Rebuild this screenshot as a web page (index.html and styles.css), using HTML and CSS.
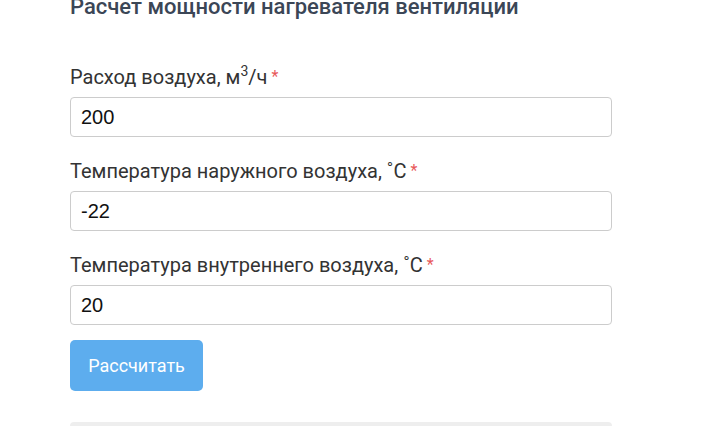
FILE: index.html
```html
<!DOCTYPE html>
<html lang="ru">
<head>
<meta charset="utf-8">
<link rel="stylesheet" href="styles.css">
</head>
<body>
<div class="calc">
  <h2 class="title">Расчет мощности нагревателя вентиляции</h2>
  <form class="form">
    <div class="group">
      <label class="label">Расход воздуха, м<sup>3</sup>/ч<span class="req">*</span></label>
      <input class="input" type="text" value="200">
    </div>
    <div class="group">
      <label class="label">Температура наружного воздуха, ˚C<span class="req">*</span></label>
      <input class="input" type="text" value="-22">
    </div>
    <div class="group">
      <label class="label">Температура внутреннего воздуха, ˚C<span class="req">*</span></label>
      <input class="input" type="text" value="20">
    </div>
    <button class="btn" type="button">Рассчитать</button>
  </form>
  <div class="result"></div>
</div>
</body>
</html>
```
FILE: styles.css
```css
html, body {
  margin: 0;
  padding: 0;
  background: #fff;
}
body {
  font-family: Roboto, "Liberation Sans", sans-serif;
  color: #333;
  overflow: hidden;
}
.calc {
  width: 542px;
  margin-left: 70px;
  margin-top: -6px;
}
.title {
  margin: 0;
  font-size: 22px;
  line-height: 26px;
  font-weight: 500;
  color: #3b4656;
}
.form {
  margin-top: 43px;
  display: flex;
  flex-direction: column;
  gap: 20px;
}
.group {
  display: flex;
  flex-direction: column;
  gap: 6px;
}
.label {
  font-size: 20px;
  line-height: 28px;
  height: 28px;
  color: #333;
}
.label sup {
  font-size: 14px;
  line-height: 0;
}
.req {
  color: #e8585a;
  font-size: 16px;
  margin-left: 4px;
  vertical-align: 2px;
}
.input {
  box-sizing: border-box;
  height: 40px;
  width: 100%;
  margin: 0;
  padding: 0 10px;
  border: 1px solid #ccc;
  border-radius: 4px;
  font-family: "Liberation Sans", Arial, sans-serif;
  font-size: 20px;
  color: #111;
  background: #fff;
}
.btn {
  align-self: flex-start;
  margin-top: -5px;
  width: 133px;
  height: 51px;
  border: 0;
  border-radius: 5px;
  background: #5dadee;
  color: #fff;
  font-family: Roboto, "Liberation Sans", sans-serif;
  font-size: 18px;
}
.result {
  margin-top: 31px;
  height: 40px;
  background: #eee;
  border-radius: 4px;
}
```
